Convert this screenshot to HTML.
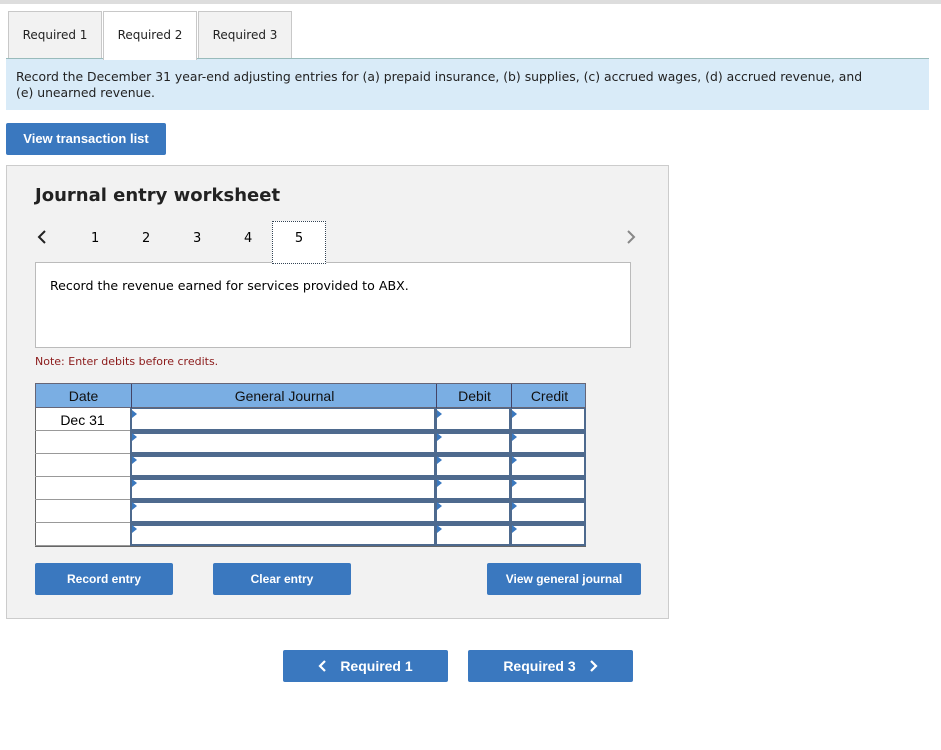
<!DOCTYPE html><html><head><style>
body{margin:0;width:941px;height:750px;background:#fff;font-family:"DejaVu Sans",Verdana,sans-serif;position:relative;overflow:hidden}
.a{position:absolute}
.tab{position:absolute;top:11px;height:47px;border:1px solid #c8c8c8;border-bottom:none;background:#f2f2f2;font-size:12px;line-height:47px;text-align:center;color:#222}
.btn{position:absolute;background:#3a78bf;color:#fff;font-family:"Liberation Sans",Arial,sans-serif;font-weight:bold;font-size:13px;text-align:center;border-radius:2px}
.cell{position:absolute;box-sizing:border-box}
</style></head><body>
<div class="a" style="left:0;top:0;width:941px;height:4px;background:#ddd"></div>
<div class="tab" style="left:8px;width:92px">Required 1</div>
<div class="tab" style="left:103px;width:92px;background:#fff;height:48px;z-index:2">Required 2</div>
<div class="tab" style="left:198px;width:92px">Required 3</div>
<div class="a" style="left:6px;top:58px;width:923px;height:52px;background:#d9ebf8;border-top:1px solid #9bb;font-size:12.4px;line-height:16px;color:#222;padding:10px 0 0 10px;box-sizing:border-box">Record the December 31 year-end adjusting entries for (a) prepaid insurance, (b) supplies, (c) accrued wages, (d) accrued revenue, and<br>(e) unearned revenue.</div>
<div class="btn" style="left:6px;top:123px;width:160px;height:32px;line-height:32px">View transaction list</div>
<div class="a" style="left:6px;top:165px;width:663px;height:454px;background:#f2f2f2;border:1px solid #ccc;box-sizing:border-box"></div>
<div class="a" style="left:35px;top:185px;font-size:18px;font-weight:bold;color:#222">Journal entry worksheet</div>
<svg class="a" style="left:36px;top:229px" width="12" height="16"><path d="M9 2L3 8L9 14" stroke="#222" stroke-width="2" fill="none"/></svg>
<div class="a" style="left:91px;top:231px;font-size:13px">1</div>
<div class="a" style="left:142px;top:231px;font-size:13px">2</div>
<div class="a" style="left:193px;top:231px;font-size:13px">3</div>
<div class="a" style="left:244px;top:231px;font-size:13px">4</div>
<div class="a" style="left:272px;top:221px;width:54px;height:43px;background:#fff;border:1px dotted #345;box-sizing:border-box;font-size:13px;text-align:center;line-height:33px;z-index:2">5</div>
<svg class="a" style="left:625px;top:229px" width="12" height="16"><path d="M3 2L9 8L3 14" stroke="#888" stroke-width="2" fill="none"/></svg>
<div class="a" style="left:35px;top:262px;width:596px;height:86px;background:#fff;border:1px solid #bbb;box-sizing:border-box;font-size:12.6px;padding:15px 0 0 14px">Record the revenue earned for services provided to ABX.</div>
<div class="a" style="left:35px;top:355px;font-size:11px;color:#8b1a1a">Note: Enter debits before credits.</div>
<div class="a" style="left:35px;top:383px;width:551px;height:164px;background:#fff;border:1px solid #666;box-sizing:border-box"></div>
<div class="a" style="left:35px;top:383px;width:551px;height:25px;background:#7aaee3;border:1px solid #667;box-sizing:border-box;font-family:'Liberation Sans',Arial;font-size:14px;color:#111;line-height:24px">
<span class="a" style="left:0;width:95px;text-align:center">Date</span><span class="a" style="left:95px;width:305px;text-align:center;border-left:1px solid #446">General Journal</span><span class="a" style="left:400px;width:75px;text-align:center;border-left:1px solid #446">Debit</span><span class="a" style="left:475px;width:75px;text-align:center;border-left:1px solid #446">Credit</span></div>
<div class="a" style="left:35px;top:408px;width:95px;height:23px;font-family:'Liberation Sans',Arial;font-size:14px;text-align:center;line-height:24px">Dec 31</div>
<div id="rows"></div>
<script>
var h='';for(var i=0;i<6;i++){var y=408+i*23;
h+='<div class="cell" style="left:35px;top:'+(y+22)+'px;width:96px;height:1px;background:#999"></div>';
h+='<div class="cell" style="left:130px;top:'+y+'px;width:306px;height:23px;border:2px solid #4e6a8e;border-top-width:'+(i?3:1)+'px"></div>';
h+='<div class="cell" style="left:435px;top:'+y+'px;width:76px;height:23px;border:2px solid #4e6a8e;border-top-width:'+(i?3:1)+'px"></div>';
h+='<div class="cell" style="left:510px;top:'+y+'px;width:76px;height:23px;border:2px solid #4e6a8e;border-top-width:'+(i?3:1)+'px"></div>';
[132,437,512].forEach(function(x){h+='<div class="cell" style="left:'+x+'px;top:'+(y+2)+'px;width:0;height:0;border-left:5px solid #3a78bf;border-top:4px solid transparent;border-bottom:4px solid transparent"></div>';});}
document.getElementById('rows').innerHTML=h;
</script>
<div class="btn" style="left:35px;top:563px;width:138px;height:32px;line-height:32px;font-size:12px">Record entry</div>
<div class="btn" style="left:213px;top:563px;width:138px;height:32px;line-height:32px;font-size:12px">Clear entry</div>
<div class="btn" style="left:487px;top:563px;width:154px;height:32px;line-height:32px;font-size:12px">View general journal</div>
<div class="btn" style="left:283px;top:650px;width:165px;height:32px;line-height:32px;font-size:14px"><svg width="10" height="12" style="vertical-align:-1px;margin-right:12px"><path d="M7 1L2 6L7 11" stroke="#fff" stroke-width="2.2" fill="none"/></svg>Required 1</div>
<div class="btn" style="left:468px;top:650px;width:165px;height:32px;line-height:32px;font-size:14px">Required 3<svg width="10" height="12" style="vertical-align:-1px;margin-left:12px"><path d="M3 1L8 6L3 11" stroke="#fff" stroke-width="2.2" fill="none"/></svg></div>
</body></html>
